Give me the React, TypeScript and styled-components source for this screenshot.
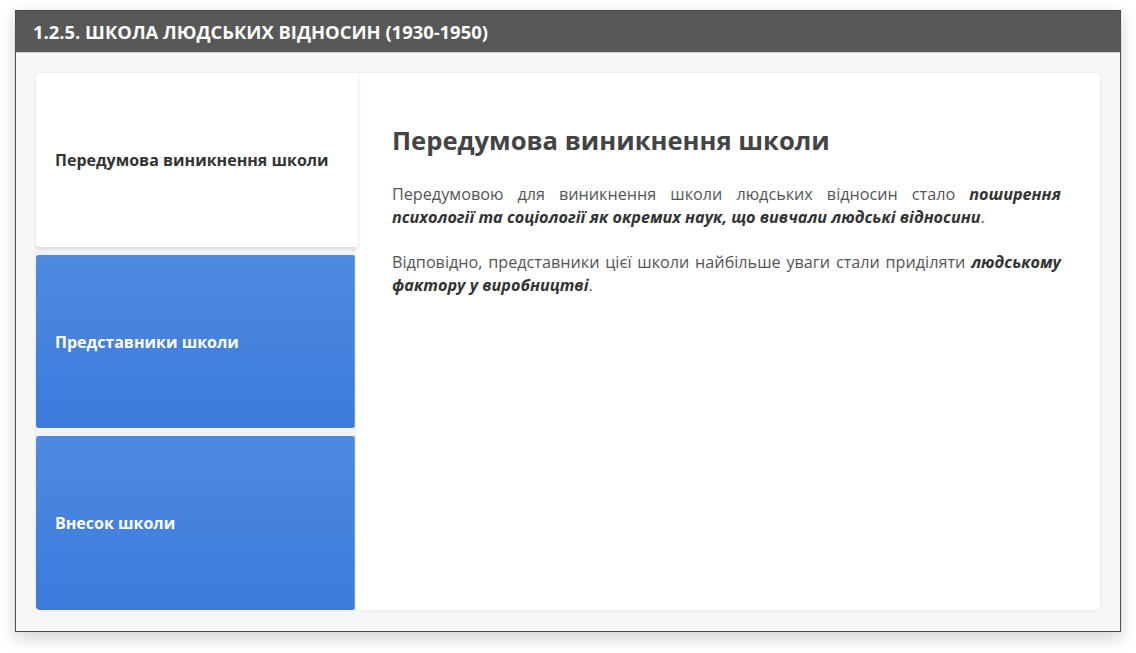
import React, { useState } from "react";
import styled, { createGlobalStyle } from "styled-components";

const GlobalStyle = createGlobalStyle`
  body {
    margin: 0;
    background: #ffffff;
    font-family: "Open Sans", "Noto Sans", sans-serif;
  }
`;

const tabs = [
  "Передумова виникнення школи",
  "Представники школи",
  "Внесок школи",
];

const App: React.FC = () => {
  const [active, setActive] = useState(0);

  return (
    <>
      <GlobalStyle />
      <Page>
        <Window>
          <Header>1.2.5. ШКОЛА ЛЮДСЬКИХ ВІДНОСИН (1930-1950)</Header>
          <Body>
            <Card>
              <TabList>
                {tabs.map((t, i) => (
                  <Tab key={t} active={i === active} onClick={() => setActive(i)}>
                    {t}
                  </Tab>
                ))}
              </TabList>
              <Content>
                <Title>Передумова виникнення школи</Title>
                <Para>
                  Передумовою для виникнення школи людських відносин стало{" "}
                  <b>
                    <i>
                      поширення психології та соціології як окремих наук, що
                      вивчали людські відносини
                    </i>
                  </b>
                  .
                </Para>
                <Para>
                  Відповідно, представники цієї школи найбільше уваги стали
                  приділяти{" "}
                  <b>
                    <i>людському фактору у виробництві</i>
                  </b>
                  .
                </Para>
              </Content>
            </Card>
          </Body>
        </Window>
      </Page>
    </>
  );
};

export default App;

const Page = styled.div`
  padding: 10px 15px 21px 15px;
`;

const Window = styled.div`
  width: 1106px;
  height: 622px;
  box-sizing: border-box;
  border: 1px solid #4a4a4a;
  background: #f7f7f7;
  display: flex;
  flex-direction: column;
  box-shadow: rgba(0, 0, 0, 0.18) 0px 6px 16px;
`;

const Header = styled.div`
  height: 41px;
  flex-shrink: 0;
  background: #585858;
  color: #ffffff;
  font-size: 18.4px;
  font-weight: 700;
  display: flex;
  align-items: center;
  padding-left: 17px;
  border-bottom: 1px solid #d0d0d0;
`;

const Body = styled.div`
  flex: 1;
  padding: 20px 20px 21px 20px;
  display: flex;
`;

const Card = styled.div`
  flex: 1;
  display: flex;
  background: #ffffff;
  border-radius: 4px;
  box-shadow: rgba(0, 0, 0, 0.1) 0px 0px 3px;
  overflow: hidden;
`;

const TabList = styled.div`
  width: 320px;
  display: flex;
  flex-direction: column;
  gap: 8px;
  background: #f3f3f3;
`;

const Tab = styled.div<{ active: boolean }>`
  flex: 1;
  display: flex;
  align-items: center;
  padding-left: 19px;
  font-size: 16px;
  font-weight: 700;
  cursor: pointer;
  border-radius: 3px;
  color: ${(p) => (p.active ? "#333333" : "#ffffff")};
  background: ${(p) =>
    p.active ? "#ffffff" : "linear-gradient(180deg, #4f8ae0 0%, #3a7bdc 100%)"};
  box-shadow: ${(p) =>
    p.active ? "rgba(0, 0, 0, 0.12) 0px 2px 4px" : "inset -1px 0 0 #6a9de6"};
  margin-right: ${(p) => (p.active ? "-2px" : "1px")};
`;

const Content = styled.div`
  flex: 1;
  padding: 50px 39px 0 36px;
  color: #444444;
`;

const Title = styled.h2`
  margin: 0 0 24px 0;
  font-size: 25.6px;
  font-weight: 700;
  line-height: 36px;
  color: #444444;
`;

const Para = styled.p`
  margin: 0 0 22px 0;
  font-size: 16.2px;
  line-height: 23px;
  text-align: justify;
  color: #555555;

  b {
    color: #333333;
  }
`;
